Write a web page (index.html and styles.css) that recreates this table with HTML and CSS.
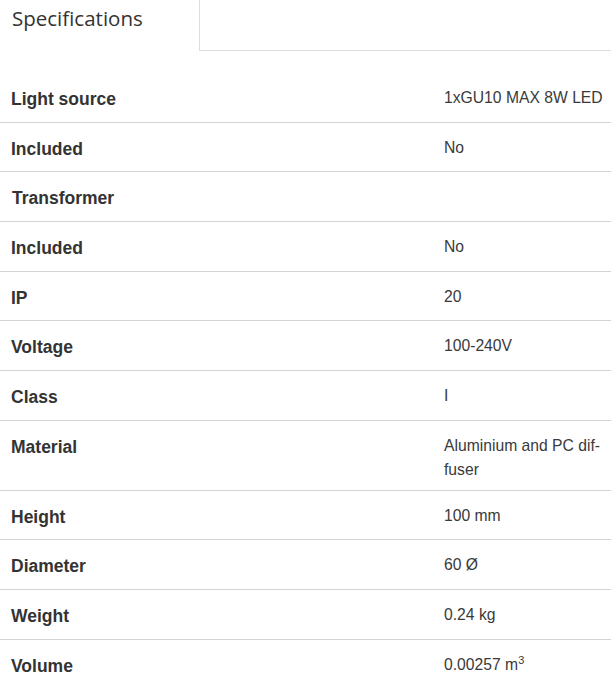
FILE: index.html
```html
<!DOCTYPE html>
<html lang="en">
<head>
<meta charset="utf-8">
<title>Specifications</title>
<link rel="stylesheet" href="styles.css">
</head>
<body>
<div class="tabs">
  <div class="tab active">Specifications</div>
  <div class="tab-fill"></div>
</div>
<table class="specs">
  <tbody>
    <tr><th>Light source</th><td>1xGU10 MAX 8W LED</td></tr>
    <tr><th>Included</th><td>No</td></tr>
    <tr><th class="group">Transformer</th><td></td></tr>
    <tr><th>Included</th><td>No</td></tr>
    <tr><th>IP</th><td>20</td></tr>
    <tr><th>Voltage</th><td>100-240V</td></tr>
    <tr><th>Class</th><td>I</td></tr>
    <tr><th>Material</th><td>Aluminium and PC dif&shy;fuser</td></tr>
    <tr><th>Height</th><td>100 mm</td></tr>
    <tr><th>Diameter</th><td>60 Ø</td></tr>
    <tr><th>Weight</th><td>0.24 kg</td></tr>
    <tr><th>Volume</th><td>0.00257 m<sup>3</sup></td></tr>
  </tbody>
</table>
</body>
</html>
```
FILE: styles.css
```css
html, body {
  margin: 0;
  padding: 0;
  background: #fff;
}
body {
  width: 611px;
  overflow: hidden;
  color: #333;
  font-family: "Liberation Sans", Arial, sans-serif;
}
.tabs {
  display: flex;
  height: 51px;
}
.tab.active {
  width: 199px;
  box-sizing: border-box;
  padding: 5px 0 0 12px;
  font-family: "Open Sans", sans-serif;
  font-size: 20.5px;
  line-height: 27px;
  color: #333;
}
.tab-fill {
  flex: 1;
  border-left: 1px solid #ddd;
  border-bottom: 1px solid #ddd;
}
.specs {
  margin-top: 22px;
  width: 611px;
  border-collapse: collapse;
  table-layout: fixed;
}
.specs tr {
  border-bottom: 1px solid #d4d4d4;
}
.specs th {
  width: 433px;
  text-align: left;
  vertical-align: top;
  padding: 14px 0 10.67px 11px;
  font-size: 17.5px;
  font-weight: bold;
  line-height: 24px;
  color: #333;
}
.specs th.group {
  padding-left: 12px;
}
.specs td {
  vertical-align: top;
  padding: 13px 0 8px 0;
  font-size: 15.7px;
  line-height: 24px;
  color: #3a3a3a;
}
.specs sup {
  font-size: 11px;
  line-height: 0;
  vertical-align: 6px;
}
```
